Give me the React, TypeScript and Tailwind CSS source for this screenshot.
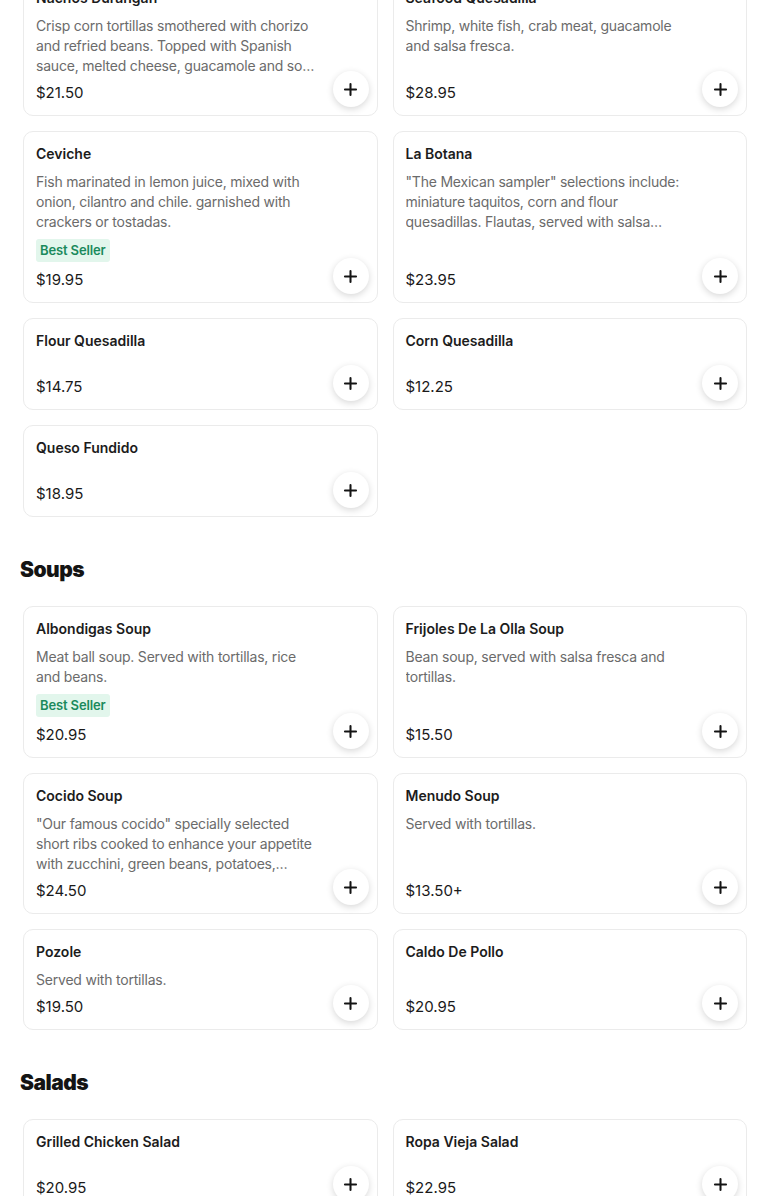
import { Plus } from 'lucide-react';

type Item = {
  name: string;
  desc?: string;
  price: string;
  best?: boolean;
};

const STARTERS: Item[] = [
  {
    name: 'Nachos Durangan',
    desc: 'Crisp corn tortillas smothered with chorizo and refried beans. Topped with Spanish sauce, melted cheese, guacamole and sour cream.',
    price: '$21.50',
  },
  {
    name: 'Seafood Quesadilla',
    desc: 'Shrimp, white fish, crab meat, guacamole and salsa fresca.',
    price: '$28.95',
  },
  {
    name: 'Ceviche',
    desc: 'Fish marinated in lemon juice, mixed with onion, cilantro and chile. garnished with crackers or tostadas.',
    price: '$19.95',
    best: true,
  },
  {
    name: 'La Botana',
    desc: '"The Mexican sampler" selections include: miniature taquitos, corn and flour quesadillas. Flautas, served with salsa fresca and guacamole.',
    price: '$23.95',
  },
  { name: 'Flour Quesadilla', price: '$14.75' },
  { name: 'Corn Quesadilla', price: '$12.25' },
  { name: 'Queso Fundido', price: '$18.95' },
];

const SOUPS: Item[] = [
  {
    name: 'Albondigas Soup',
    desc: 'Meat ball soup. Served with tortillas, rice and beans.',
    price: '$20.95',
    best: true,
  },
  {
    name: 'Frijoles De La Olla Soup',
    desc: 'Bean soup, served with salsa fresca and tortillas.',
    price: '$15.50',
  },
  {
    name: 'Cocido Soup',
    desc: '"Our famous cocido" specially selected short ribs cooked to enhance your appetite with zucchini, green beans, potatoes, carrots and cabbage.',
    price: '$24.50',
  },
  { name: 'Menudo Soup', desc: 'Served with tortillas.', price: '$13.50+' },
  { name: 'Pozole', desc: 'Served with tortillas.', price: '$19.50' },
  { name: 'Caldo De Pollo', price: '$20.95' },
];

const SALADS: Item[] = [
  { name: 'Grilled Chicken Salad', price: '$20.95' },
  { name: 'Ropa Vieja Salad', price: '$22.95' },
];

function MenuCard({ item }: { item: Item }) {
  return (
    <div className="relative flex flex-col min-h-[92px] rounded-[10px] border border-[#ebebeb] bg-white p-3">
      <h3 className="text-[14px] leading-5 font-semibold text-[#1c1c1c]">{item.name}</h3>
      {item.desc && (
        <p className="mt-2 max-w-[281px] text-[14px] leading-5 tracking-[-0.015em] text-[#6b6b6b] line-clamp-3">
          {item.desc}
        </p>
      )}
      {item.best && (
        <span className="mt-[7px] mb-px flex h-[23px] self-start items-center rounded-[3px] bg-[#e2f6ec] px-1 text-[13px] font-semibold tracking-[-0.01em] text-[#1b8a5c]">
          Best Seller
        </span>
      )}
      <p className="mt-auto pt-[7px] text-[15px] leading-5 text-[#1a1a1a]">{item.price}</p>
      <button className="absolute right-2 bottom-2 flex h-9 w-9 items-center justify-center rounded-full bg-white shadow-[0_2px_7px_rgba(0,0,0,0.16)]">
        <Plus size={19} strokeWidth={2.6} className="text-[#141414]" />
      </button>
    </div>
  );
}

function Grid({ items }: { items: Item[] }) {
  return (
    <div className="mx-[3px] grid grid-cols-2 gap-[15px]">
      {items.map((it) => (
        <MenuCard key={it.name} item={it} />
      ))}
    </div>
  );
}

function Section({ title, items }: { title: string; items: Item[] }) {
  return (
    <section className="mt-[37px]">
      <h2 className="mb-[20px] text-[21px] leading-8 font-black tracking-tight text-[#141414]">{title}</h2>
      <Grid items={items} />
    </section>
  );
}

export default function App() {
  return (
    <div className="h-[1196px] overflow-hidden bg-white font-['Inter',sans-serif]">
      <div className="-mt-[25px] px-5">
        <Grid items={STARTERS} />
        <Section title="Soups" items={SOUPS} />
        <Section title="Salads" items={SALADS} />
      </div>
    </div>
  );
}
